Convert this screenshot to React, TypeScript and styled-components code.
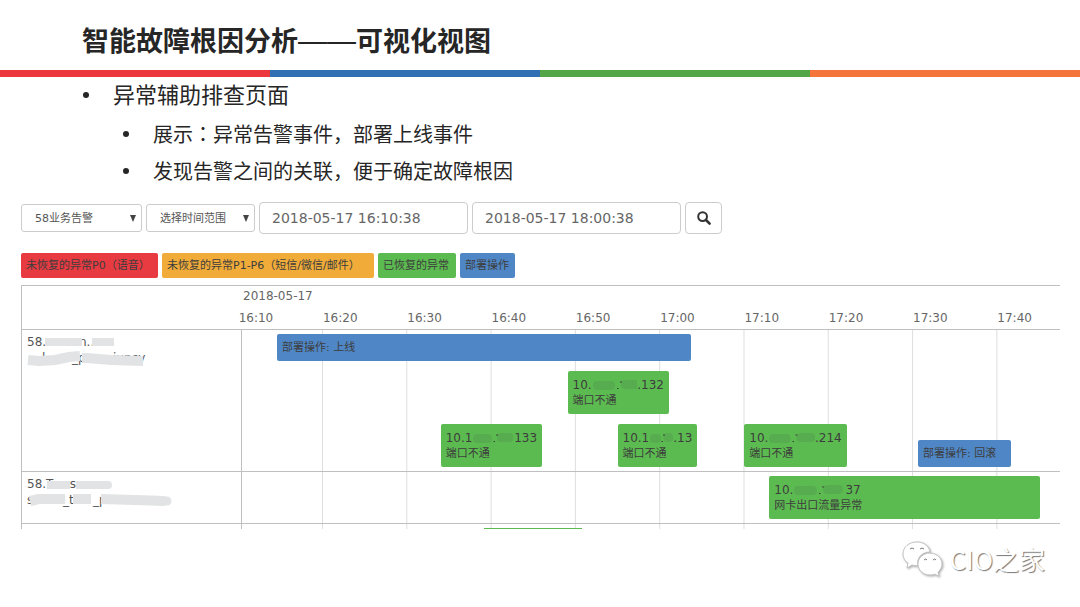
import React from "react";
import styled, { createGlobalStyle } from "styled-components";

const cjk = `"Noto Sans CJK SC", sans-serif`;
const uiFont = `"DejaVu Sans", "Noto Sans CJK SC", sans-serif`;
const palette = { red: "#e83a41", amber: "#f0ab38", green: "#5cbb50", blue: "#4f87c6" };
type Tone = keyof typeof palette;

const GlobalStyle = createGlobalStyle`
  * { box-sizing: border-box; }
  body { margin: 0; background: #fff; color: #4d4d4d; font-family: ${uiFont}; font-size: 11px; }
`;

const Page = styled.main`
  display: flex;
  flex-direction: column;
`;
const Title = styled.h1`
  margin: 0;
  padding: 20px 82px 10px;
  font: 700 27px/40px ${cjk};
  color: #262626;
`;
const Dash = styled.span`
  font: 400 29px/20px "Liberation Sans", sans-serif;
`;
const Stripe = styled.div`
  display: grid;
  grid-template-columns: repeat(4, 1fr);
  height: 7px;
`;
const StripePart = styled.span<{ $color: string }>`
  background: ${(p) => p.$color};
`;
const Outline = styled.ul`
  margin: 0;
  padding: 0 0 0 82px;
  list-style: none;
  color: #262626;
  font: 22px/32px ${cjk};
`;
const SubOutline = styled(Outline)`
  margin-top: 6px;
  padding-left: 40px;
  font-size: 20px;
  line-height: 37px;
`;
const Point = styled.li`
  &::before {
    content: "";
    display: inline-block;
    width: 6px;
    height: 6px;
    margin: 0 24px 0 1px;
    border-radius: 50%;
    background: #262626;
    vertical-align: 5px;
  }
`;
const Colon = styled.span`
  font-family: "Noto Sans CJK TC", sans-serif;
`;

const Tool = styled.section`
  padding: 13px 20px 0 21px;
`;
const Filters = styled.form`
  display: flex;
  align-items: center;
  gap: 4px;
`;
const SelectBox = styled.div<{ $width: number }>`
  display: grid;
  align-items: center;
  width: ${(p) => p.$width}px;
  & > * { grid-area: 1 / 1; }
`;
const Select = styled.select`
  appearance: none;
  width: 100%;
  height: 28px;
  padding: 0 13px;
  border: 1px solid #ccc;
  border-radius: 3px;
  background: #fff;
  color: #555;
  font: 11px ${uiFont};
`;
const Arrow = styled.svg`
  justify-self: end;
  width: 6px;
  height: 7px;
  margin-right: 6px;
  fill: #444;
  pointer-events: none;
`;
const DateInput = styled.input`
  width: 209px;
  height: 32px;
  padding: 0 12px;
  border: 1px solid #ccc;
  border-radius: 4px;
  color: #666;
  font: 14px ${uiFont};
`;
const SearchButton = styled.button`
  display: grid;
  place-items: center;
  width: 37px;
  height: 32px;
  padding: 0;
  border: 1px solid #ccc;
  border-radius: 4px;
  background: #fff;
`;

const Legend = styled.ul`
  display: grid;
  grid-template-columns: 137px 212px 78px 55px;
  gap: 4px;
  margin: 19px 0 7px;
  padding: 0;
  list-style: none;
`;
const LegendItem = styled.li<{ $tone: Tone }>`
  padding-left: 5px;
  border-radius: 2px;
  background: ${(p) => palette[p.$tone]};
  color: #3d3d3d;
  font-size: 11px;
  line-height: 25px;
  white-space: nowrap;
`;

const Timeline = styled.div`
  display: grid;
  grid-template-columns: 220px 1fr;
  border-top: 1px solid #bfbfbf;
  border-left: 1px solid #bfbfbf;
`;
const Corner = styled.div`
  border-bottom: 1px solid #bfbfbf;
`;
const Axis = styled.div`
  border-bottom: 1px solid #bfbfbf;
  color: #666;
  font-size: 12px;
  line-height: 22px;
`;
const AxisDate = styled.div`
  padding-left: 1px;
  line-height: 21px;
`;
const Ticks = styled.div`
  display: flex;
`;
const Tick = styled.span`
  flex: none;
  padding-left: 1px;
`;
const GroupLabel = styled.div<{ $last?: boolean }>`
  padding: 4px 5px 0;
  border-right: 1px solid #bfbfbf;
  border-bottom: ${(p) => (p.$last ? 0 : 1)}px solid #bfbfbf;
  color: #555;
  font-size: 12px;
  line-height: 16px;
`;
const Masked = styled.svg`
  display: block;
`;
const Lanes = styled.div<{ $last?: boolean }>`
  display: flex;
  flex-direction: column;
  gap: 10px;
  padding: ${(p) => (p.$last ? "4px 0 0" : "4px 0")};
  border-bottom: ${(p) => (p.$last ? 0 : 1)}px solid #bfbfbf;
`;
const Lane = styled.div`
  display: flex;
  align-items: flex-end;
`;
const Event = styled.div<{ $tone: Tone; $sliver?: boolean }>`
  flex: none;
  overflow: hidden;
  padding: ${(p) => (p.$sliver ? "1px 0 0" : "6px 5px 5px")};
  border-radius: ${(p) => (p.$sliver ? 0 : 2)}px;
  background: ${(p) => palette[p.$tone]};
  color: #3d3d3d;
  font-size: 11px;
  line-height: 16px;
  white-space: nowrap;
`;
const Address = styled.div`
  display: flex;
  font-size: 12px;
`;

const Watermark = styled.footer`
  display: flex;
  justify-content: flex-end;
  align-items: center;
  gap: 7px;
  padding: 10px 35px 0 0;
  color: #fff;
  font: 26px/40px ${cjk};
  text-shadow: 1px 1px 1px #777;
`;
const Bubbles = styled.svg`
  fill: #fff;
  stroke: #c4c4c4;
  filter: drop-shadow(1px 1px 1px #aaa);
`;

/* The visible window runs from 16:10:31 and is SPAN seconds long. */
const SPAN = 5822;
const FIRST_TICK = -31;
const pct = (seconds: number) => `${(seconds / SPAN) * 100}%`;

const ticks = ["16:10", "16:20", "16:30", "16:40", "16:50", "17:00", "17:10", "17:20", "17:30", "17:40"];

const Gridded = styled(Lanes)`
  background-image: linear-gradient(to right, #dedede 1px, transparent 1px);
  background-position: 80px 0;
  background-size: ${(600 / SPAN) * 100}% 100%;
`;

type Item = {
  from: number;
  to: number;
  tone: Tone;
  text?: string;
  head?: string;
  gap?: number;
  tail?: string;
};
type Group = { label: React.ReactNode; name: string; lanes: Item[][] };

const groups: Group[] = [
  {
    name: "a",
    label: (
      <Masked width="170" height="34" fill="#555" fontSize="12">
        <text x="0" y="12">58.</text>
        <text x="52" y="12">n..</text>
        <text x="15" y="28">l</text>
        <text x="45" y="28">_p</text>
        <text x="86" y="28">iuncy</text>
        <g fill="none" stroke="#e1e3e4">
          <path d="M18 8H55M65 8H87" strokeWidth="8" />
          <path d="M1 26L12 27L28 26L42 23L53 22" strokeWidth="10" />
          <path d="M55 24L60 24L84 26L116 27" strokeWidth="10" />
        </g>
      </Masked>
    ),
    lanes: [
      [{ from: 249, to: 3199, tone: "blue", text: "部署操作: 上线" }],
      [{ from: 2317, to: 3039, tone: "green", text: "端口不通", head: "10.", gap: 50, tail: ".132" }],
      [
        { from: 1414, to: 2136, tone: "green", text: "端口不通", head: "10.1", gap: 43, tail: "133" },
        { from: 2673, to: 3241, tone: "green", text: "端口不通", head: "10.1", gap: 25, tail: ".13" },
        { from: 3575, to: 4304, tone: "green", text: "端口不通", head: "10.", gap: 49, tail: ".214" },
        { from: 4812, to: 5477, tone: "blue", text: "部署操作: 回滚" },
      ],
    ],
  },
  {
    name: "b",
    label: (
      <Masked width="170" height="34" fill="#555" fontSize="12">
        <text x="0" y="12">58.T</text>
        <text x="39" y="12">.s</text>
        <text x="0" y="28">s</text>
        <text x="36" y="28">_t</text>
        <text x="66" y="28">_p</text>
        <g fill="none" stroke="#e1e3e4" strokeLinejoin="round">
          <path d="M20 9H43M49 9H78" strokeWidth="8" />
          <path d="M75 9H81" strokeWidth="8" strokeLinecap="round" />
          <path d="M3 25L12 23H38M46 23H64M74 23L108 24L138 25" strokeWidth="10" />
          <path d="M138 25H140" strokeWidth="9" strokeLinecap="round" />
        </g>
      </Masked>
    ),
    lanes: [[{ from: 3753, to: 5683, tone: "green", text: "网卡出口流量异常", head: "10.", gap: 52, tail: "37" }]],
  },
  { name: "c", label: null, lanes: [[{ from: 1720, to: 2421, tone: "green" }]] },
];

const Smudge = ({ width }: { width: number }) => (
  <svg width={width} height="16" aria-hidden="true">
    <g fill="#58ac50">
      <rect x="1" y="4" width={width * 0.44} height="9" rx="4" />
      <rect x={width * 0.58} y="3" width={width * 0.38} height="9" rx="4" />
    </g>
    <path d={`M${width * 0.5} 11.5h1.5M${width * 0.56} 5h2`} stroke="#3d3d3d" />
  </svg>
);

const Down = () => (
  <Arrow viewBox="0 0 6 7" aria-hidden="true">
    <path d="M0 0h6L3 7z" />
  </Arrow>
);

export default function App() {
  return (
    <Page>
      <GlobalStyle />
      <Title>
        智能故障根因分析<Dash>——</Dash>可视化视图
      </Title>
      <Stripe>
        {["#ed373e", "#2f70b4", "#52a647", "#f4743a"].map((c) => (
          <StripePart key={c} $color={c} />
        ))}
      </Stripe>
      <Outline>
        <Point>
          异常辅助排查页面
          <SubOutline>
            <Point>
              展示<Colon>：</Colon>异常告警事件，部署上线事件
            </Point>
            <Point>发现告警之间的关联，便于确定故障根因</Point>
          </SubOutline>
        </Point>
      </Outline>
      <Tool>
        <Filters onSubmit={(e) => e.preventDefault()}>
          <SelectBox $width={121}>
            <Select aria-label="业务">
              <option>58业务告警</option>
            </Select>
            <Down />
          </SelectBox>
          <SelectBox $width={109}>
            <Select aria-label="时间范围">
              <option>选择时间范围</option>
            </Select>
            <Down />
          </SelectBox>
          <DateInput aria-label="开始时间" defaultValue="2018-05-17 16:10:38" />
          <DateInput aria-label="结束时间" defaultValue="2018-05-17 18:00:38" />
          <SearchButton type="submit" aria-label="搜索">
            <svg width="14" height="14" viewBox="0 0 14 14" fill="none" stroke="#333">
              <circle cx="5.6" cy="5.6" r="4.4" strokeWidth="2" />
              <path d="M9 9l3.6 3.6" strokeWidth="2.6" strokeLinecap="round" />
            </svg>
          </SearchButton>
        </Filters>
        <Legend>
          <LegendItem $tone="red">未恢复的异常P0（语音）</LegendItem>
          <LegendItem $tone="amber">未恢复的异常P1-P6（短信/微信/邮件）</LegendItem>
          <LegendItem $tone="green">已恢复的异常</LegendItem>
          <LegendItem $tone="blue">部署操作</LegendItem>
        </Legend>
        <Timeline>
          <Corner />
          <Axis>
            <AxisDate>2018-05-17</AxisDate>
            <Ticks>
              {ticks.map((t, i) => (
                <Tick
                  key={t}
                  style={{
                    width: i === ticks.length - 1 ? "auto" : pct(600),
                    marginLeft: i ? 0 : pct(FIRST_TICK),
                  }}
                >
                  {t}
                </Tick>
              ))}
            </Ticks>
          </Axis>
          {groups.map((g, gi) => {
            const last = gi === groups.length - 1;
            return (
              <React.Fragment key={g.name}>
                <GroupLabel $last={last}>{g.label}</GroupLabel>
                <Gridded $last={last}>
                  {g.lanes.map((lane, li) => (
                    <Lane key={li}>
                      {lane.map((e, i) => (
                        <Event
                          key={e.from}
                          $tone={e.tone}
                          $sliver={!e.text}
                          style={{ width: pct(e.to - e.from), marginLeft: pct(e.from - (i ? lane[i - 1].to : 0)) }}
                        >
                          {e.head && (
                            <Address>
                              {e.head}
                              <Smudge width={e.gap ?? 0} />
                              {e.tail}
                            </Address>
                          )}
                          {e.text}
                        </Event>
                      ))}
                    </Lane>
                  ))}
                </Gridded>
              </React.Fragment>
            );
          })}
        </Timeline>
      </Tool>
      <Watermark>
        <Bubbles width="41" height="37" viewBox="0 0 41 37" aria-hidden="true">
          <path d="M15 1C7 1 1 6 1 13c0 4 2 7 5 9l-1 5 5-3c2 .6 4 .8 6 .7C14 17 20 11 28 11 27 5 22 1 15 1z" />
          <path d="M28 12c-7 0-12 5-12 11s5 11 12 11c2 0 3-.3 5-.8l4 2-1-4c2-2 4-5 4-8 0-6-5-11-12-11z" />
          <path d="M8 8q2-2 4 0M18 8q2-2 4 0M22 19q2-2 3 0M31 19q2-2 3 0" fill="none" stroke="#777" />
        </Bubbles>
        CIO之家
      </Watermark>
    </Page>
  );
}
